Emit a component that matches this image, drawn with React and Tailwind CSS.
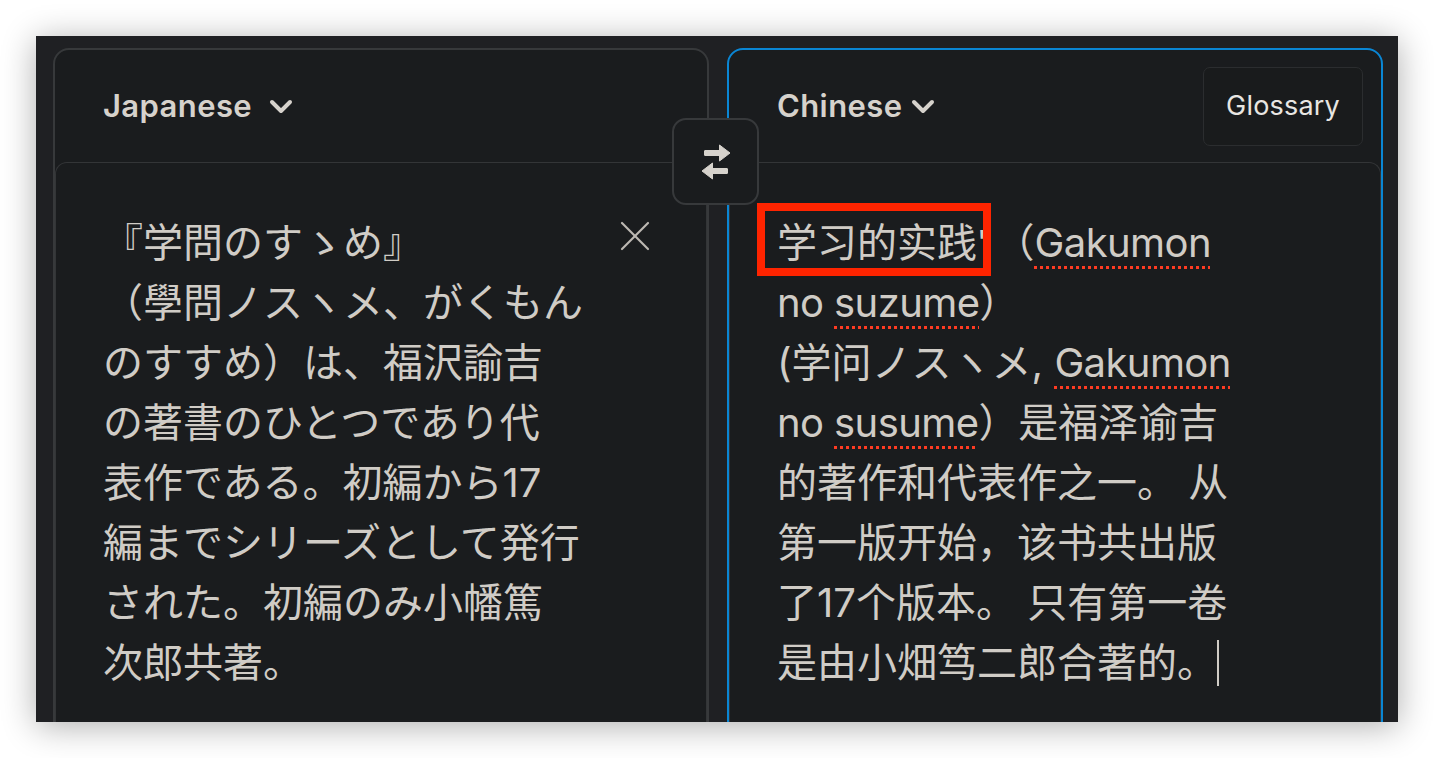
import React from "react";

const jaLines = [
    "『学問のすゝめ』",
    "（學問ノスヽメ、がくもん",
    "のすすめ）は、福沢諭吉",
    "の著書のひとつであり代",
    "表作である。初編から17",
    "編までシリーズとして発行",
    "された。初編のみ小幡篤",
    "次郎共著。",
];

const Squiggle = ({ children }) => (
    <span className="tracking-[-0.6px] underline decoration-dotted decoration-[#ff3b22] decoration-[2.5px] underline-offset-[9px]">
        {children}
    </span>
);

const Chevron = ({ className }) => (
    <svg viewBox="0 0 24 15" className={className} fill="none" stroke="currentColor" strokeWidth="4" strokeLinecap="round" strokeLinejoin="round">
        <polyline points="3,3 12,12 21,3" />
    </svg>
);

const SwapIcon = () => (
    <svg viewBox="0 0 30 36" className="w-[30px] h-[36px]" fill="currentColor" stroke="currentColor" strokeWidth="1" strokeLinejoin="round">
        <rect x="3.5" y="6.5" width="16" height="5" rx="0.5" />
        <polygon points="18.5,1 29,9 18.5,17" />
        <rect x="10.5" y="24.5" width="16" height="5" rx="0.5" />
        <polygon points="11.5,19 1,27 11.5,35" />
    </svg>
);

const App = () => {
    return (
        <div className="h-screen w-full bg-white p-[36px] overflow-hidden">
            <div className="h-full bg-[#1f2023] shadow-[0_4px_32px_rgba(0,0,0,0.32)] overflow-hidden pt-[12px] pl-[17px] pr-[15px]">
                <div className="relative flex gap-[18px]">
                    {/* Source panel */}
                    <div className="flex-1 h-[720px] flex flex-col rounded-t-[16px] border-2 border-[#37393b] bg-[#1a1c1e]">
                        <div className="h-[112px] shrink-0 flex items-center pl-[48px] text-[#d6d2cc]" style={{ fontFamily: "Inter, sans-serif" }}>
                            <span className="text-[31px] font-semibold tracking-[0.4px]">Japanese</span>
                            <Chevron className="w-[24px] h-[15px] ml-[17px] mt-[1px]" />
                        </div>
                        <div className="flex-1 flex justify-between border-t border-x border-[#333537] rounded-t-[12px] pt-[50px] pl-[47px] pr-[56px]">
                            <div
                                className="text-[40px] leading-[60px] text-[#d0ccc6]"
                                style={{ fontFamily: "Inter, 'Noto Sans CJK JP', sans-serif" }}
                            >
                                {jaLines.map((line, i) => (
                                    <div key={i} className="whitespace-nowrap">{line}</div>
                                ))}
                            </div>
                            <button className="mt-[8px] h-[30px] w-[30px] text-[#bdb9b3]">
                                <svg viewBox="0 0 30 30" className="w-[30px] h-[30px]" fill="none" stroke="currentColor" strokeWidth="2.2" strokeLinecap="round">
                                    <line x1="2" y1="2" x2="28" y2="28" />
                                    <line x1="28" y1="2" x2="2" y2="28" />
                                </svg>
                            </button>
                        </div>
                    </div>

                    {/* Target panel */}
                    <div className="flex-1 h-[720px] flex flex-col rounded-t-[16px] border-2 border-[#0a86d4] bg-[#1a1c1e]">
                        <div className="h-[112px] shrink-0 flex items-center justify-between pl-[48px] pr-[18px]" style={{ fontFamily: "Inter, sans-serif" }}>
                            <div className="flex items-center text-[#d6d2cc]">
                                <span className="text-[31px] font-semibold tracking-[0.4px]">Chinese</span>
                                <Chevron className="w-[24px] h-[15px] ml-[9px] mt-[1px]" />
                            </div>
                            <button className="h-[79px] w-[160px] rounded-[7px] border border-[#2b2d2f] bg-[#191b1c] text-[27px] tracking-[0.2px] text-[#e8e6e2]">
                                Glossary
                            </button>
                        </div>
                        <div className="flex-1 border-t border-x border-[#333537] rounded-t-[12px] pt-[50px] pl-[47px] pr-[40px]">
                            <div
                                className="text-[40px] leading-[60px] text-[#d0ccc6]"
                                style={{ fontFamily: "Inter, 'Noto Sans CJK SC', sans-serif" }}
                            >
                                <div className="whitespace-nowrap">
                                    <span className="relative inline-block">
                                        学习的实践<span className="text-[32px] align-top">'</span>
                                        <span className="absolute -left-[20px] -top-[10px] -right-[4px] -bottom-[3px] border-[8px] border-[#ff2400]"></span>
                                    </span>
                                    <span className="ml-[8px]">（</span>
                                    <Squiggle>Gakumon</Squiggle>
                                </div>
                                <div className="whitespace-nowrap">
                                    <span className="tracking-[-0.6px]">no </span><Squiggle>suzume</Squiggle>）
                                </div>
                                <div className="whitespace-nowrap">
                                    (学问ノスヽメ, <Squiggle>Gakumon</Squiggle>
                                </div>
                                <div className="whitespace-nowrap">
                                    <span className="tracking-[-0.6px]">no </span><Squiggle>susume</Squiggle>）是福泽谕吉
                                </div>
                                <div className="whitespace-nowrap">的著作和代表作之一。 从</div>
                                <div className="whitespace-nowrap">第一版开始，该书共出版</div>
                                <div className="whitespace-nowrap">了17个版本。 只有第一卷</div>
                                <div className="whitespace-nowrap flex items-center">
                                    是由小畑笃二郎合著的。
                                    <span className="inline-block w-[2px] h-[46px] bg-[#d0ccc6]"></span>
                                </div>
                            </div>
                        </div>
                    </div>

                    {/* Swap button */}
                    <button className="absolute left-[619px] top-[70px] w-[87px] h-[87px] rounded-[14px] border-2 border-[#37393b] bg-[#1a1c1e] flex items-center justify-center text-[#d6d2cc]">
                        <SwapIcon />
                    </button>
                </div>
            </div>
        </div>
    );
};

export default App;
